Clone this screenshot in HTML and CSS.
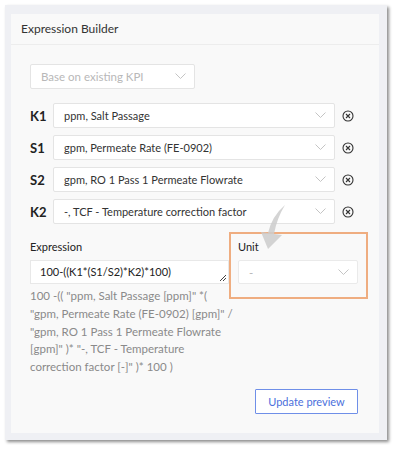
FILE: index.html
```html
<!DOCTYPE html>
<html lang="en">
  <head>
    <meta charset="UTF-8" />
    <meta name="viewport" content="width=device-width, initial-scale=1.0" />
    <title>Expression Builder</title>
    <link rel="stylesheet" href="styles.css">
  </head>
  <body>
    <div class="frame">
      <div class="panel">
        <div class="panel-header">Expression Builder</div>
        <div class="panel-body">
          <div class="select select-base">
            <span class="placeholder">Base on existing KPI</span>
            <svg class="chevron" width="11" height="7" viewBox="0 0 11 7"><path d="M0.5 0.5 L5.5 5.5 L10.5 0.5" fill="none" stroke="#c4c4c4" stroke-width="1"/></svg>
          </div>

          <div class="vars">
            <div class="var-row">
              <span class="var-name">K1</span>
              <div class="select select-var">
                <span>ppm, Salt Passage</span>
                <svg class="chevron" width="11" height="7" viewBox="0 0 11 7"><path d="M0.5 0.5 L5.5 5.5 L10.5 0.5" fill="none" stroke="#c4c4c4" stroke-width="1"/></svg>
              </div>
              <svg class="clear" width="12" height="12" viewBox="0 0 12 12"><circle cx="6" cy="6" r="5" fill="none" stroke="#333" stroke-width="1.1"/><path d="M4 4 L8 8 M8 4 L4 8" stroke="#333" stroke-width="1.1"/></svg>
            </div>
            <div class="var-row">
              <span class="var-name">S1</span>
              <div class="select select-var">
                <span>gpm, Permeate Rate (FE-0902)</span>
                <svg class="chevron" width="11" height="7" viewBox="0 0 11 7"><path d="M0.5 0.5 L5.5 5.5 L10.5 0.5" fill="none" stroke="#c4c4c4" stroke-width="1"/></svg>
              </div>
              <svg class="clear" width="12" height="12" viewBox="0 0 12 12"><circle cx="6" cy="6" r="5" fill="none" stroke="#333" stroke-width="1.1"/><path d="M4 4 L8 8 M8 4 L4 8" stroke="#333" stroke-width="1.1"/></svg>
            </div>
            <div class="var-row">
              <span class="var-name">S2</span>
              <div class="select select-var">
                <span>gpm, RO 1 Pass 1 Permeate Flowrate</span>
                <svg class="chevron" width="11" height="7" viewBox="0 0 11 7"><path d="M0.5 0.5 L5.5 5.5 L10.5 0.5" fill="none" stroke="#c4c4c4" stroke-width="1"/></svg>
              </div>
              <svg class="clear" width="12" height="12" viewBox="0 0 12 12"><circle cx="6" cy="6" r="5" fill="none" stroke="#333" stroke-width="1.1"/><path d="M4 4 L8 8 M8 4 L4 8" stroke="#333" stroke-width="1.1"/></svg>
            </div>
            <div class="var-row">
              <span class="var-name">K2</span>
              <div class="select select-var">
                <span>-, TCF - Temperature correction factor</span>
                <svg class="chevron" width="11" height="7" viewBox="0 0 11 7"><path d="M0.5 0.5 L5.5 5.5 L10.5 0.5" fill="none" stroke="#c4c4c4" stroke-width="1"/></svg>
              </div>
              <svg class="clear" width="12" height="12" viewBox="0 0 12 12"><circle cx="6" cy="6" r="5" fill="none" stroke="#333" stroke-width="1.1"/><path d="M4 4 L8 8 M8 4 L4 8" stroke="#333" stroke-width="1.1"/></svg>
            </div>
          </div>

          <div class="expr-section">
            <div class="expr-col">
              <label class="field-label">Expression</label>
              <div class="expr-input">
                <span>100-((K1*(S1/S2)*K2)*100)</span>
                <svg class="resize" width="8" height="8" viewBox="0 0 8 8"><path d="M1 7 L7 1 M4 7 L7 4" stroke="#444" stroke-width="1"/></svg>
              </div>
              <p class="expr-desc">100 -(( "ppm, Salt Passage [ppm]" *( "gpm, Permeate Rate (FE-0902) [gpm]" / "gpm, RO 1 Pass 1 Permeate Flowrate [gpm]" )* "-, TCF - Temperature correction factor [-]" )* 100 )</p>
            </div>
            <div class="unit-box">
              <label class="field-label">Unit</label>
              <div class="select select-unit">
                <span class="placeholder">-</span>
                <svg class="chevron" width="11" height="7" viewBox="0 0 11 7"><path d="M0.5 0.5 L5.5 5.5 L10.5 0.5" fill="none" stroke="#c4c4c4" stroke-width="1"/></svg>
              </div>
            </div>
          </div>

          <div class="actions">
            <button class="btn-preview">Update preview</button>
          </div>
        </div>
      </div>
    </div>

    <!-- hint arrow pointing at the unit field -->
    <svg class="hint-arrow" width="30" height="50" viewBox="258 204 30 50">
      <path d="M285 205 Q272 216 268 233 L261 232 L268 249 L282 235 L274 234 Q277 218 285 205 Z" fill="#cdcdcd" fill-opacity="0.85"/>
    </svg>
  </body>
</html>
```

FILE: styles.css
```css
* {
  box-sizing: border-box;
}

body {
  margin: 0;
  background: #fff;
  font-family: Lato, "Open Sans", sans-serif;
  color: #333;
  position: relative;
}

.frame {
  margin: 5px;
  width: 382px;
  height: 435px;
  padding: 9px 8px 7px 6px;
  background: #eff0f4;
  box-shadow: 2px 2px 3px rgba(0, 0, 0, 0.45);
}

.panel {
  height: 100%;
  background: #f9f9f9;
}

.panel-header {
  height: 31px;
  line-height: 30px;
  padding-left: 10px;
  font-size: 12px;
  color: #333;
  border-bottom: 1px solid #ededed;
}

.panel-body {
  padding: 19px 0 0 19px;
}

.select {
  display: flex;
  align-items: center;
  justify-content: space-between;
  height: 25px;
  background: #fff;
  border: 1px solid #e4e4e4;
  border-radius: 2px;
  padding: 0 8px 0 10px;
  font-size: 11px;
  color: #333;
}

.select .placeholder {
  color: #b8b8b8;
  font-size: 11.5px;
}

.select-base {
  width: 165px;
}

.vars {
  margin-top: 14px;
  display: flex;
  flex-direction: column;
  gap: 7px;
}

.var-row {
  display: flex;
  align-items: center;
}

.var-name {
  width: 23px;
  font-size: 13px;
  font-weight: bold;
  color: #222;
}

.select-var {
  width: 282px;
}

.clear {
  margin-left: 7px;
}

.expr-section {
  display: flex;
  align-items: flex-start;
  margin-top: 8px;
}

.expr-col {
  width: 199px;
  padding-top: 6px;
}

.field-label {
  display: block;
  height: 18px;
  line-height: 18px;
  font-size: 11px;
  color: #222;
  margin-bottom: 4px;
}

.expr-input {
  position: relative;
  height: 24px;
  background: #fff;
  border: 1px solid #e8e8e8;
  padding: 0 0 0 9px;
  line-height: 22px;
  font-size: 11px;
  color: #222;
}

.resize {
  position: absolute;
  right: 1px;
  bottom: 1px;
}

.expr-desc {
  margin: 3px 0 0;
  width: 206px;
  font-size: 11.5px;
  line-height: 17.8px;
  color: #8a8a8a;
}

.unit-box {
  width: 139px;
  border: 2px solid #efad80;
  padding: 4px 8px 13px 7px;
}

.select-unit {
  width: 120px;
  height: 24px;
  border-color: #eaeaea;
}

.actions {
  display: flex;
  justify-content: flex-end;
  padding-right: 21px;
  margin-top: 13px;
}

.btn-preview {
  width: 103px;
  height: 25px;
  background: #fff;
  border: 1px solid #6f8fe8;
  border-radius: 1px;
  font-family: Lato, "Open Sans", sans-serif;
  font-size: 11px;
  color: #4b6fdc;
  cursor: pointer;
}

.hint-arrow {
  position: absolute;
  left: 258px;
  top: 204px;
}
```
